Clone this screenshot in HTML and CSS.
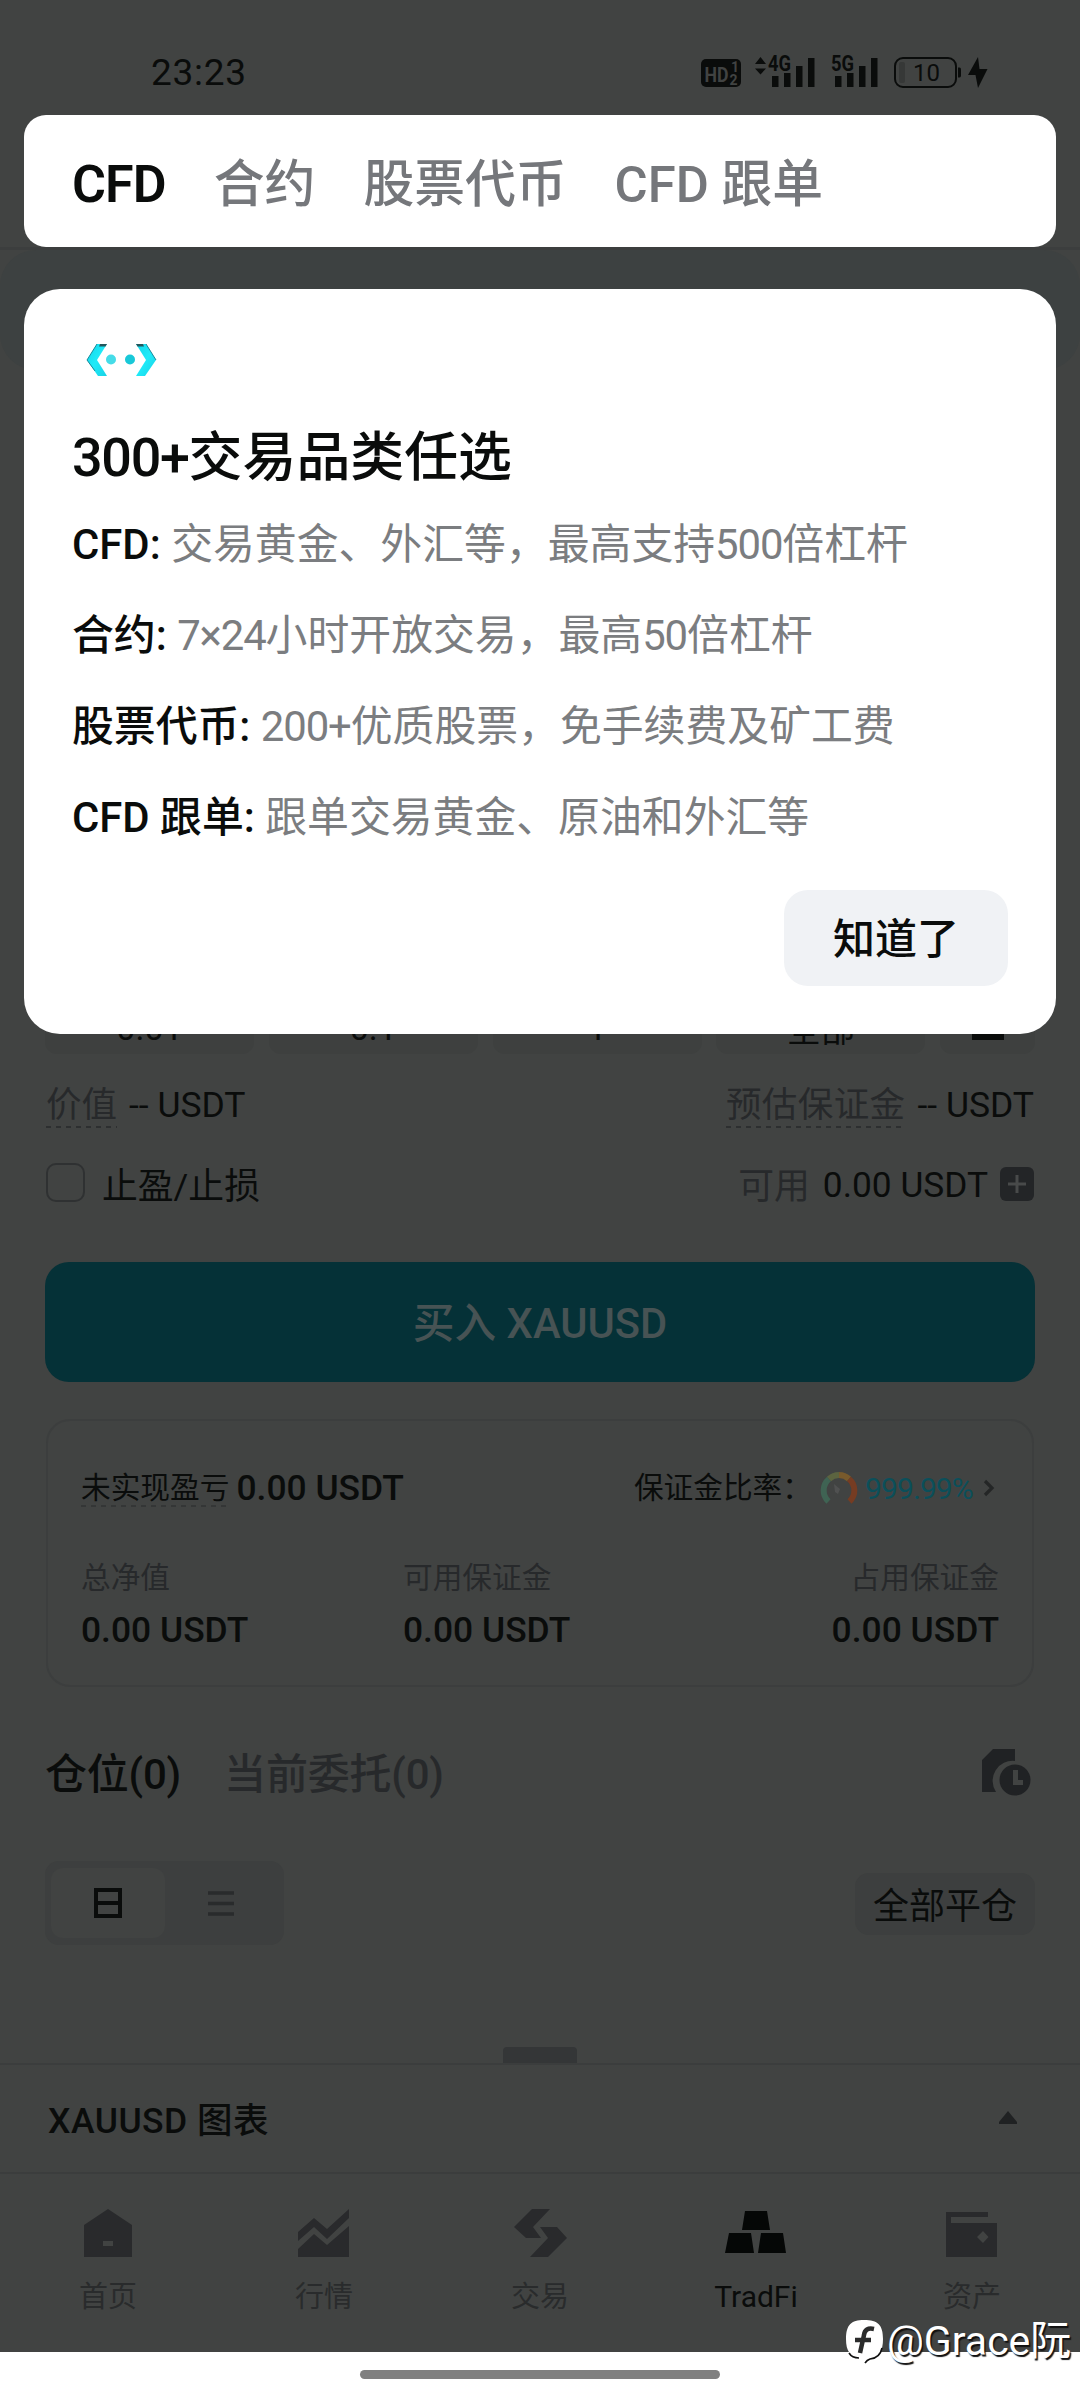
FILE: index.html
```html
<!DOCTYPE html>
<html lang="zh-CN">
<head>
<meta charset="utf-8">
<title>TradFi</title>
<link rel="stylesheet" href="styles.css">
</head>
<body>
<div class="screen">
  <div class="app">
    <header class="status">
      <span class="clock">23:23</span>
      <svg class="status-icons" width="288" height="46" viewBox="0 -10 288 46">
        <rect x="0" y="5" width="40" height="28" rx="5" fill="#0a0c0b"/>
        <text class="hd" x="3.500" y="27.500" textLength="24" lengthAdjust="spacingAndGlyphs">HD</text>
        <text class="hd-num" x="30" y="18">1</text>
        <text class="hd-num" x="28.500" y="31">2</text>
        <path d="M54 10l5.500-7 5.500 7zM54 14.500l5.500 6 5.500-6z" fill="#0a0c0b"/>
        <text class="net" x="67" y="17" textLength="23" lengthAdjust="spacingAndGlyphs">4G</text>
        <path d="M71 22h6.500v11H71zM83 19h6.500v14H83zM95 12h6.500v21H95zM107 4h6.500v29H107z" fill="#0a0c0b"/>
        <text class="net" x="130" y="17" textLength="23" lengthAdjust="spacingAndGlyphs">5G</text>
        <path d="M134 22h6.500v11H134zM146 19h6.500v14H146zM158 12h6.500v21H158zM170 4h6.500v29H170z" fill="#0a0c0b"/>
        <rect x="194" y="4" width="61" height="29" rx="8" fill="none" stroke="#0a0c0b" stroke-width="2"/>
        <rect x="198" y="8" width="6" height="21" rx="2" fill="#363837"/>
        <path d="M257 13.500h1.500q1.500 0 1.500 2v6q0 2-1.500 2H257z" fill="#0a0c0b"/>
        <text class="batt" x="212" y="27">10</text>
        <path d="M277 3l-10 18h7.500L277 34l9.500-19h-8z" fill="#0a0c0b"/>
      </svg>
    </header>
    <div class="market"></div>
    <div class="chips">
      <span class="chip">0.01</span><span class="chip">0.1</span><span class="chip">1</span><span class="chip">全部</span>
      <span class="chip chip-icon"><svg width="32" height="32" viewBox="0 0 32 32"><path d="M0 32V22L21 1l9 9-14 14h16v8z" fill="#0a0c0b"/></svg></span>
    </div>
    <div class="row value-row">
      <span class="pair"><span class="muted dotted">价值</span><span>-- USDT</span></span>
      <span class="pair"><span class="muted dotted">预估保证金</span><span>-- USDT</span></span>
    </div>
    <div class="row stop-row">
      <span class="pair stop"><i class="checkbox"></i><span>止盈/止损</span></span>
      <span class="pair avail"><span class="muted">可用</span><span class="amount">0.00 USDT</span>
        <svg width="34" height="34" viewBox="0 0 34 34"><rect width="34" height="34" rx="6" fill="#232527"/><path d="M17 8v18M8 17h18" stroke="#484a4a" stroke-width="3"/></svg></span>
    </div>
    <div class="buy">买入 <b>XAUUSD</b></div>
    <section class="account">
      <div class="row pnl-row">
        <span class="pair pnl"><span class="label dotted">未实现盈亏</span><b>0.00 USDT</b></span>
        <span class="pair ratio"><span class="label">保证金比率：</span>
          <svg class="gauge" width="38" height="34" viewBox="0 0 38 34"><g fill="none" stroke-width="6"><path d="M8.500 30.500A15 15 0 0 1 9 8" stroke="#3f6353"/><path d="M9 8A15 15 0 0 1 19 4" stroke="#5c6440"/><path d="M19 4A15 15 0 0 1 29 8" stroke="#785a2c"/><path d="M29 8A15 15 0 0 1 29.500 30.500" stroke="#763c22"/></g><path d="M14 13l6 5-2 5-3-2z" fill="#505151"/></svg>
          <span class="teal">999.99%</span>
          <svg class="chev" width="12" height="18" viewBox="0 0 12 18"><path d="M2 2l7 7-7 7" fill="none" stroke="#242626" stroke-width="3.200"/></svg></span>
      </div>
      <div class="stats">
        <div><span>总净值</span><b>0.00 USDT</b></div>
        <div><span>可用保证金</span><b>0.00 USDT</b></div>
        <div><span>占用保证金</span><b>0.00 USDT</b></div>
      </div>
    </section>
    <div class="row tabs-row">
      <div class="order-tabs"><span class="on">仓位(0)</span><span class="muted">当前委托(0)</span></div>
      <svg width="50" height="49" viewBox="0 0 50 49"><path d="M1 11L12 0h22v12A20 20 0 0 0 15 43H1z" fill="#202224"/><circle cx="34" cy="31" r="15.500" fill="#202224"/><path d="M32 21h5v10h5v5H32z" fill="#414342"/></svg>
    </div>
    <div class="row view-row">
      <div class="toggle">
        <span class="opt active"><svg width="28" height="30" viewBox="0 0 28 30"><path d="M2 2h24v26H2zM2 15h24" fill="none" stroke="#0a0c0b" stroke-width="4"/></svg></span>
        <span class="opt"><svg width="26" height="25" viewBox="0 0 26 25"><path d="M0 2h26M0 12.500h26M0 23h26" stroke="#292b2c" stroke-width="3.500"/></svg></span>
      </div>
      <span class="close-all">全部平仓</span>
    </div>
    <div class="handle"></div>
    <div class="row chart-row">
      <span>XAUUSD 图表</span>
      <svg width="20" height="15" viewBox="0 0 20 15"><path d="M10 1L19 12v2H1v-2z" fill="#202223"/></svg>
    </div>
    <nav class="nav">
      <span class="item"><svg width="62" height="50" viewBox="0 0 62 50"><path fill-rule="evenodd" d="M31 1L55 17v32H7V17zM26 33v5h10v-5z" fill="#292a2c"/></svg>首页</span>
      <span class="item"><svg width="62" height="50" viewBox="0 0 62 50"><path d="M5 24L21 10l13 11L56 1v9L34 31 21 19 5 33zM5 41L21 26l13 11L56 18v31H5z" fill="#292a2c"/></svg>行情</span>
      <span class="item"><svg width="62" height="50" viewBox="0 0 62 50"><path d="M23 1h18L24 19l8 11H17L5 19zM31 19h17l10 11-19 19H21L39 30z" fill="#292a2c"/></svg>交易</span>
      <span class="item current"><svg width="62" height="50" viewBox="0 0 62 50"><path d="M20 3h22l3 19H17zM4 25h22l3 20H0zM36 25h22l3 20H33z" fill="#050706"/></svg>TradFi</span>
      <span class="item"><svg width="62" height="50" viewBox="0 0 62 50"><path fill-rule="evenodd" d="M5 4h42v5H10v6h46v34H5zM36 29l6 6 5.500-6-5.500-6z" fill="#292a2c"/></svg>资产</span>
    </nav>
  </div>
  <footer class="gesture"><i></i></footer>

  <div class="guide">
    <div class="types"><span class="sel">CFD</span><span>合约</span><span>股票代币</span><span>CFD 跟单</span></div>
    <div class="dialog">
      <svg class="logo" width="96" height="48" viewBox="0 0 96 48">
        <defs><linearGradient id="cy" x1="0" y1="0" x2="1" y2="1"><stop offset="0" stop-color="#10d6ea"/><stop offset=".5" stop-color="#1feaf8"/><stop offset="1" stop-color="#18d2e6"/></linearGradient></defs>
        <path d="M24 8h10L24 24l10 16h-9L14 24z" fill="url(#cy)"/><path d="M73 8H63l10 16-10 16h9l11-16z" fill="url(#cy)"/>
        <path d="M27 8h7l-1.500 2.500H26zM63 8h7l1 2.500h-6.500z" fill="#24575c"/><path d="M24 8L14 24l8 11M73 8l10 16" fill="none" stroke="#16899a" stroke-width="1"/>
        <circle cx="38" cy="23.500" r="5" fill="#45dce8"/><circle cx="57" cy="23.500" r="5" fill="#18c8d8"/>
      </svg>
      <h1><span class="n">300+</span>交易品类任选</h1>
      <p><b>CFD: </b>交易黄金、外汇等，最高支持<span class="d">500</span>倍杠杆</p>
      <p><b>合约: </b><span class="d">7×24</span>小时开放交易，最高<span class="d">50</span>倍杠杆</p>
      <p><b>股票代币: </b><span class="d">200+</span>优质股票，免手续费及矿工费</p>
      <p><b>CFD 跟单: </b>跟单交易黄金、原油和外汇等</p>
      <span class="ok">知道了</span>
    </div>
  </div>

  <div class="mark">
    <svg width="38" height="46" viewBox="0 0 38 46"><path d="M18 0C32 0 37 5 37 19 37 31 33 37 24 38q-3 1-5 4-1-4-4-4C4 37 0 31 0 19 0 5 5 0 18 0z" fill="#fff"/><path d="M3 33q3 5 10 5M36 28q-2 10-12 11-3 1-5 4" fill="none" stroke="#111" stroke-width="1.600"/><path d="M28 9q-9-2-10 6l-4 18M9 20h16" fill="none" stroke="#2b2c2c" stroke-width="4.500"/></svg>
    <span>@Grace阮</span>
  </div>
</div>
</body>
</html>
```
FILE: styles.css
```css
* { box-sizing: border-box; }
body { margin: 0; font-family: Roboto, "Noto Sans CJK SC", sans-serif; color: #0a0c0b; }
svg { display: block; flex: none; }
b { font-weight: 500; }
.screen { position: relative; width: 1080px; height: 2400px; overflow: hidden; background: #fff; display: flex; flex-direction: column; }
.app { height: 2352px; background: #414342; display: flex; flex-direction: column; }
.row { display: flex; align-items: center; justify-content: space-between; flex: none; padding: 0 46px; }
.pair { display: flex; align-items: center; }
.muted { color: #27292b; }
.dotted { background: repeating-linear-gradient(90deg, #2d2f30 0 5px, transparent 5px 10px) 0 100% / 100% 2px no-repeat; }

.status { height: 250px; flex: none; display: flex; justify-content: space-between; align-items: flex-start; padding: 44px 91px 0 151px; border-bottom: 3px solid #3c3e3e; }
.clock { font-size: 37px; line-height: 38px; letter-spacing: .7px; padding-top: 10px; }
.hd { font: 700 21px Roboto, sans-serif; fill: #414342; }
.hd-num { font: 700 14px Roboto, sans-serif; fill: #414342; }
.net { font: 700 22px Roboto, sans-serif; fill: #0a0c0b; }
.batt { font: 400 24px Roboto, sans-serif; fill: #0a0c0b; }
.market { height: 120px; flex: none; background: #3d4141; border-radius: 36px; }

.chips { flex: none; margin-top: 628px; height: 56px; display: grid; grid-template-columns: repeat(4, 209px) 95px; justify-content: space-between; padding: 0 45px; }
.chip { background: #3e403f; border-radius: 12px; font-size: 34px; display: flex; align-items: center; justify-content: center; padding-top: 3px; }
.chip-icon { padding: 0 0 4px; }

.value-row { height: 102px; font-size: 35.500px; padding-bottom: 1px; }
.value-row .pair { gap: 12px; }
.value-row .dotted { line-height: 46px; }
.value-row .pair:last-child .dotted { letter-spacing: .4px; }
.stop-row { height: 58px; font-size: 35.800px; padding-bottom: 5px; }
.stop { gap: 17px; }
.avail { gap: 13px; }
.avail svg { margin: 2px 0 0 -1px; }
.avail .amount { font-size: 35.300px; padding-top: 5px; }
.checkbox { width: 39px; height: 39px; border: 2px solid #2f3132; border-radius: 10px; }
.buy { flex: none; margin: 48px 45px 0; height: 120px; border-radius: 24px; background: #053137; color: #475354; font-size: 41.700px; font-weight: 500; line-height: 123px; text-align: center; }

.account { flex: none; margin: 37px 46px 0; height: 268px; border: 2px solid #3c3e3e; border-radius: 24px; padding: 34px 33px 0; }
.pnl-row { padding: 0; height: 66px; font-size: 35.400px; }
.label { font-size: 29.700px; line-height: 38px; }
.account .dotted { background-image: repeating-linear-gradient(90deg, #343636 0 5px, transparent 5px 10px); }
.pnl { gap: 7px; }
.teal { color: #0b4f5a; font-size: 30px; letter-spacing: -.9px; margin-left: 7px; width: 111px; }
.gauge { margin-left: 8px; }
.chev { margin-left: 7px; margin-right: 4px; }
.stats { display: grid; grid-template-columns: 322px 1fr auto; margin-top: 36px; }
.stats div { display: flex; flex-direction: column; }
.stats div:last-child { align-items: flex-end; }
.stats span { color: #27292b; font-size: 29.700px; line-height: 42px; }
.stats b { font-size: 35.400px; line-height: 42px; margin-top: 10px; }

.tabs-row { height: 120px; margin-top: 26px; font-size: 42px; padding: 0 49px 0 45px; font-weight: 500; }
.order-tabs { display: flex; gap: 43px; padding-bottom: 5px; }
.order-tabs span { letter-spacing: -.2px; }
.view-row { margin-top: 28px; height: 84px; padding: 0 45px; }
.toggle { width: 239px; height: 84px; background: #3d3f3f; border-radius: 14px; display: flex; padding: 7px 6px; }
.opt { width: 114px; display: flex; align-items: center; justify-content: center; border-radius: 12px; }
.active { background: #414342; }
.close-all { width: 180px; height: 62px; border-radius: 14px; background: #3d3f3f; font-size: 36px; line-height: 68px; text-align: center; margin-top: 2px; }

.handle { width: 74px; height: 16px; margin: auto auto 0; background: #343637; border-radius: 4px 4px 0 0; flex: none; }
.chart-row { height: 111px; border: solid #3b3d3d; border-width: 2px 0; padding: 0 62px 2px 48px; font-size: 35.500px; font-weight: 500; letter-spacing: .5px; }
.nav { flex: none; height: 178px; display: grid; grid-template-columns: repeat(5, 1fr); padding-top: 34px; }
.item { display: flex; flex-direction: column; align-items: center; gap: 18px; font-size: 29px; line-height: 42px; color: #292b2c; }
.current { color: #0a0c0b; font-size: 30px; }
.gesture { flex: 1; padding-top: 18px; }
.gesture i { display: block; width: 360px; height: 9px; border-radius: 5px; margin: 0 auto; background: #808080; }

.guide { position: absolute; left: 24px; top: 115px; width: 1032px; }
.types { height: 132px; background: #fff; border-radius: 22px; display: flex; align-items: center; gap: 48px; padding: 7px 48px 0; font-size: 50.800px; font-weight: 500; color: #75777b; line-height: 60px; white-space: nowrap; }
.types .sel { color: #0a0c0b; font-weight: 600; font-size: 52px; letter-spacing: -.9px; }
.dialog { margin-top: 42px; height: 745px; background: #fff; border-radius: 36px; padding: 47px 48px 0; color: #7b7d80; display: flex; flex-direction: column; }
.logo { margin: 0 0 38px 1px; }
.dialog h1 { margin: 0; font-size: 53.900px; line-height: 72px; font-weight: 500; color: #0a0c0b; white-space: nowrap; }
.dialog .n { letter-spacing: -1.300px; }
.dialog .d { letter-spacing: -1.100px; }
.dialog p { margin: 0; font-size: 41.850px; line-height: 60px; height: 91px; white-space: nowrap; }
.dialog h1 + p { margin-top: 21px; }
.dialog p b { color: #0a0c0b; }
.ok { align-self: flex-end; width: 224px; height: 96px; border-radius: 24px; background: #f0f2f5; color: #0a0c0b; font-size: 42px; font-weight: 500; line-height: 100px; text-align: center; margin-top: 11px; }

.mark { position: absolute; left: 846px; top: 2320px; display: flex; align-items: flex-start; gap: 3px; color: #fff; font-size: 41px; line-height: 42px; text-shadow: 1.500px 2px 1px #111; white-space: nowrap; }
```
